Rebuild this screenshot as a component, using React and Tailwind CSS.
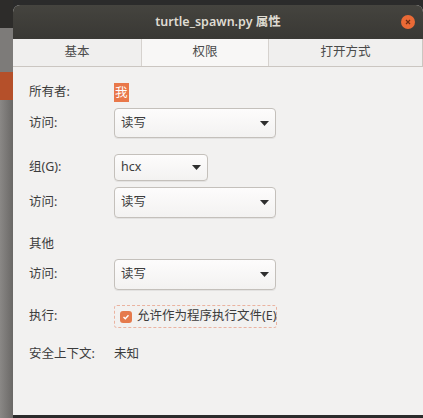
const font = { fontFamily: '"Noto Sans", "Noto Sans CJK SC", sans-serif' }

function Arrow() {
  return (
    <svg width="9" height="5" viewBox="0 0 9 5" className="shrink-0">
      <path d="M0 0 L9 0 L4.5 5 Z" fill="#2e2e2e" />
    </svg>
  )
}

function Select({ value, width, height }) {
  return (
    <div
      className={`flex items-center justify-between rounded-[4px] border border-[#c4c0bb] bg-gradient-to-b from-[#fdfcfc] to-[#f3f2f1] pl-[6px] pr-[6px] text-[12.5px] text-[#3c3c3c] shadow-[0_1px_0_rgba(0,0,0,0.06)] ${width} ${height}`}
    >
      <span>{value}</span>
      <Arrow />
    </div>
  )
}

function Row({ label, children, className }) {
  return (
    <div className={`flex items-center ${className}`}>
      <div className="w-[85px] shrink-0 whitespace-nowrap text-[12.5px] text-[#3c3c3c]">{label}</div>
      {children}
    </div>
  )
}

export default function App() {
  return (
    <div className="flex h-[418px] w-[423px] overflow-hidden bg-[#2b2b2b]" style={font}>
      <div className="flex w-[13px] shrink-0 flex-col">
        <div className="h-[28px] bg-[#2d2c2a]" />
        <div className="h-[44px] bg-[#7d7b79]" />
        <div className="h-[28px] bg-[#b5502a]" />
        <div className="flex-1 bg-gradient-to-r from-[#8a8886] to-[#6a6866]" />
      </div>
      <div className="mt-[5px] flex h-[410px] flex-1 flex-col overflow-hidden rounded-t-[7px] bg-[#f2f1f0]">
        <div className="relative flex h-[34px] shrink-0 items-center justify-center bg-gradient-to-b from-[#45443f] to-[#393834]">
          <span className="text-[12.5px] font-semibold text-[#dfdbd2]">turtle_spawn.py 属性</span>
          <div className="absolute right-[8px] top-[10px] flex h-[14px] w-[14px] items-center justify-center rounded-full bg-[#ea6a36]">
            <svg width="6" height="6" viewBox="0 0 6 6">
              <path d="M1 1 L5 5 M5 1 L1 5" stroke="#6b2a10" strokeWidth="1.2" />
            </svg>
          </div>
        </div>
        <div className="flex h-[28px] shrink-0 border-b border-[#cbc6c1] text-[12.5px] text-[#4a4a4a]">
          <div className="flex w-[128px] items-center justify-center bg-[#f0efee]">基本</div>
          <div className="flex w-[128px] items-center justify-center border-x border-[#d6d2ce] bg-[#f8f7f6]">权限</div>
          <div className="flex flex-1 items-center justify-center border-r border-[#cbc6c1] bg-[#f0efee]">打开方式</div>
        </div>
        <div className="flex flex-1 flex-col pl-[16px]">
          <Row label="所有者:" className="mt-[15px] h-[20px]">
            <span className="bg-[#e9784a] px-[1px] text-[12.5px] leading-[19px] text-white">我</span>
          </Row>
          <Row label="访问:" className="mt-[6px] h-[30px]">
            <Select value="读写" width="w-[162px]" height="h-[30px]" />
          </Row>
          <Row label="组(G):" className="mt-[16px] h-[27px]">
            <Select value="hcx" width="w-[94px]" height="h-[27px]" />
          </Row>
          <Row label="访问:" className="mt-[6px] h-[31px]">
            <Select value="读写" width="w-[162px]" height="h-[31px]" />
          </Row>
          <div className="mt-[17px] h-[18px] text-[12.5px] leading-[18px] text-[#3c3c3c]">其他</div>
          <Row label="访问:" className="mt-[6px] h-[31px]">
            <Select value="读写" width="w-[162px]" height="h-[31px]" />
          </Row>
          <Row label="执行:" className="mt-[15px] h-[23px]">
            <div className="flex h-[23px] w-[163px] items-center gap-[5px] whitespace-nowrap rounded-[3px] border border-dashed border-[#eab3a0] pl-[5px] text-[12.5px] text-[#3c3c3c]">
              <div className="flex h-[12px] w-[12px] shrink-0 items-center justify-center rounded-[3px] bg-[#e57a4c]">
                <svg width="8" height="8" viewBox="0 0 8 8">
                  <path d="M1.5 4 L3.3 5.8 L6.5 2.3" stroke="white" strokeWidth="1.4" fill="none" />
                </svg>
              </div>
              <span>允许作为程序执行文件(E)</span>
            </div>
          </Row>
          <Row label="安全上下文:" className="mt-[17px] h-[18px]">
            <span className="text-[12.5px] text-[#3c3c3c]">未知</span>
          </Row>
        </div>
      </div>
    </div>
  )
}
